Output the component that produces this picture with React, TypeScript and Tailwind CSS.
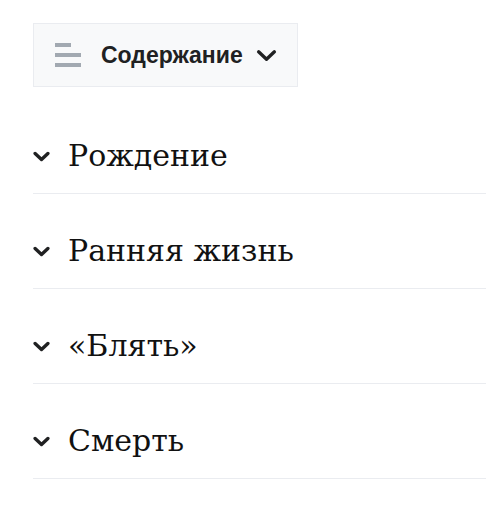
const sections = ['Рождение', 'Ранняя жизнь', '«Блять»', 'Смерть']

const Chevron = ({ className, width = 3 }: { className?: string; width?: number }) => (
  <svg viewBox="0 0 20 12" className={className} fill="none" stroke="currentColor" strokeWidth={width} strokeLinecap="round" strokeLinejoin="round">
    <path d="M2.5 2.5l7.5 7 7.5-7" />
  </svg>
)

export default function App() {
  return (
    <div className="min-h-[510px] bg-white pl-[33px] pt-[23px] text-[#202122]">
      <button className="flex h-[64px] w-[265px] items-center border border-[#eaecf0] bg-[#f8f9fa] pl-[21px]">
        <span className="flex w-[26px] flex-col gap-[6px]">
          <span className="h-[4px] w-[16px] bg-[#a2a9b1]" />
          <span className="h-[4px] w-[26px] bg-[#a2a9b1]" />
          <span className="h-[4px] w-[26px] bg-[#a2a9b1]" />
        </span>
        <span className="ml-[20px] text-[23px] font-bold font-['Liberation_Sans',Arial,sans-serif]">Содержание</span>
        <Chevron className="ml-[13px] h-[13px] w-[21px]" width={3.2} />
      </button>
      <ul className="mt-[12px]">
        {sections.map((s) => (
          <li key={s} className="flex items-center border-b border-[#eaecf0] pb-[17px] pt-[37px]">
            <Chevron className="h-[11px] w-[17px]" width={4} />
            <span className="ml-[18px] text-[30px] leading-[40px] text-[#111] font-['DejaVu_Serif',Georgia,serif]">{s}</span>
          </li>
        ))}
      </ul>
    </div>
  )
}
